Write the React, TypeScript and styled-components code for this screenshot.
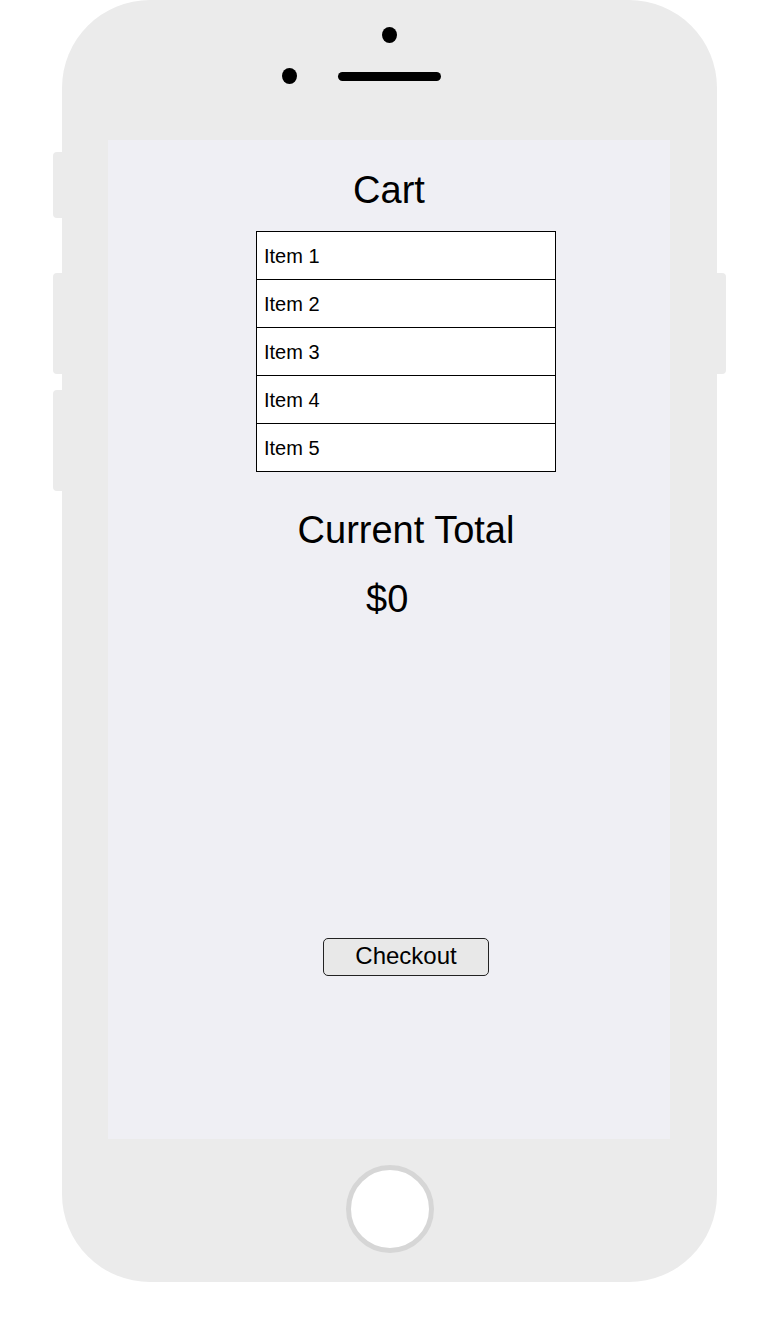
import React from 'react';
import styled, { createGlobalStyle } from 'styled-components';

const GlobalStyle = createGlobalStyle`
    body {
        margin: 0;
        background: #ffffff;
        font-family: "Liberation Sans", Arial, sans-serif;
    }
`;

const items = ['Item 1', 'Item 2', 'Item 3', 'Item 4', 'Item 5'];

// Wireframe of a phone showing the cart screen
export default function App() {
    return (
        <>
            <GlobalStyle />
            <Stage>
                <Rail>
                    <SideButton side="left" top={152} height={66} />
                    <SideButton side="left" top={55} height={101} />
                    <SideButton side="left" top={16} height={101} />
                </Rail>

                <Phone>
                    <TopBezel>
                        <Camera />
                        <SpeakerRow>
                            <Sensor />
                            <Speaker />
                            <span />
                        </SpeakerRow>
                    </TopBezel>

                    <Screen>
                        <Title>Cart</Title>
                        <ItemList>
                            {items.map(item => (
                                <ItemRow key={item}>{item}</ItemRow>
                            ))}
                        </ItemList>
                        <TotalLabel>Current Total</TotalLabel>
                        <TotalValue>$0</TotalValue>
                        <CheckoutButton>Checkout</CheckoutButton>
                    </Screen>

                    <BottomBezel>
                        <HomeButton />
                    </BottomBezel>
                </Phone>

                <Rail>
                    <SideButton side="right" top={273} height={101} />
                </Rail>
            </Stage>
        </>
    );
}

const Stage = styled.div`
    display: flex;
    align-items: flex-start;
    padding-left: 53px;
`;

const Rail = styled.div`
    display: flex;
    flex-direction: column;
    width: 9px;
`;

const SideButton = styled.div<{ side: 'left' | 'right'; top: number; height: number }>`
    margin-top: ${p => p.top}px;
    height: ${p => p.height}px;
    background: #ebebeb;
    border-radius: ${p => (p.side === 'left' ? '4px 0 0 4px' : '0 4px 4px 0')};
`;

const Phone = styled.div`
    width: 655px;
    height: 1282px;
    background: #ebebeb;
    border-radius: 88px;
    display: flex;
    flex-direction: column;
    align-items: center;
`;

const TopBezel = styled.div`
    height: 140px;
    width: 100%;
    display: flex;
    flex-direction: column;
    align-items: center;
    padding-top: 27px;
    box-sizing: border-box;
`;

const Camera = styled.div`
    width: 15px;
    height: 16px;
    border-radius: 50%;
    background: #000;
`;

const SpeakerRow = styled.div`
    display: grid;
    grid-template-columns: 1fr auto 1fr;
    align-items: center;
    width: 100%;
    margin-top: 25px;
`;

const Sensor = styled.div`
    justify-self: end;
    margin-right: 41px;
    width: 15px;
    height: 16px;
    border-radius: 50%;
    background: #000;
`;

const Speaker = styled.div`
    width: 103px;
    height: 9px;
    border-radius: 5px;
    background: #000;
`;

const Screen = styled.div`
    width: 562px;
    height: 999px;
    margin-left: -1px;
    background: #efeff4;
    display: flex;
    flex-direction: column;
    align-items: flex-start;
    padding-top: 28px;
    box-sizing: border-box;
    color: #000;
`;

const Title = styled.div`
    width: 100%;
    text-align: center;
    font-size: 38px;
    line-height: 44px;
`;

const ItemList = styled.div`
    margin: 19px 0 0 148px;
    width: 300px;
    border: 1px solid #000;
    border-bottom: none;
    background: #fff;
    box-sizing: border-box;
`;

const ItemRow = styled.div`
    height: 48px;
    line-height: 49px;
    padding-left: 7px;
    border-bottom: 1px solid #000;
    box-sizing: border-box;
    font-size: 20px;
`;

const TotalLabel = styled.div`
    margin: 36px 0 0 148px;
    width: 300px;
    text-align: center;
    font-size: 38px;
    line-height: 44px;
`;

const TotalValue = styled.div`
    margin: 25px 0 0 258px;
    font-size: 38px;
    line-height: 44px;
`;

const CheckoutButton = styled.button`
    margin: 317px 0 0 215px;
    width: 166px;
    height: 38px;
    padding: 0 0 2px;
    background: #e8e8e8;
    border: 1px solid #222;
    border-radius: 5px;
    font-family: "Liberation Sans", Arial, sans-serif;
    font-size: 24px;
    color: #000;
`;

const BottomBezel = styled.div`
    flex: 1;
    width: 100%;
    display: flex;
    justify-content: center;
    padding-top: 26px;
    box-sizing: border-box;
`;

const HomeButton = styled.div`
    width: 88px;
    height: 88px;
    border-radius: 50%;
    border: 5px solid #d6d6d6;
    background: #fff;
    box-sizing: border-box;
`;
